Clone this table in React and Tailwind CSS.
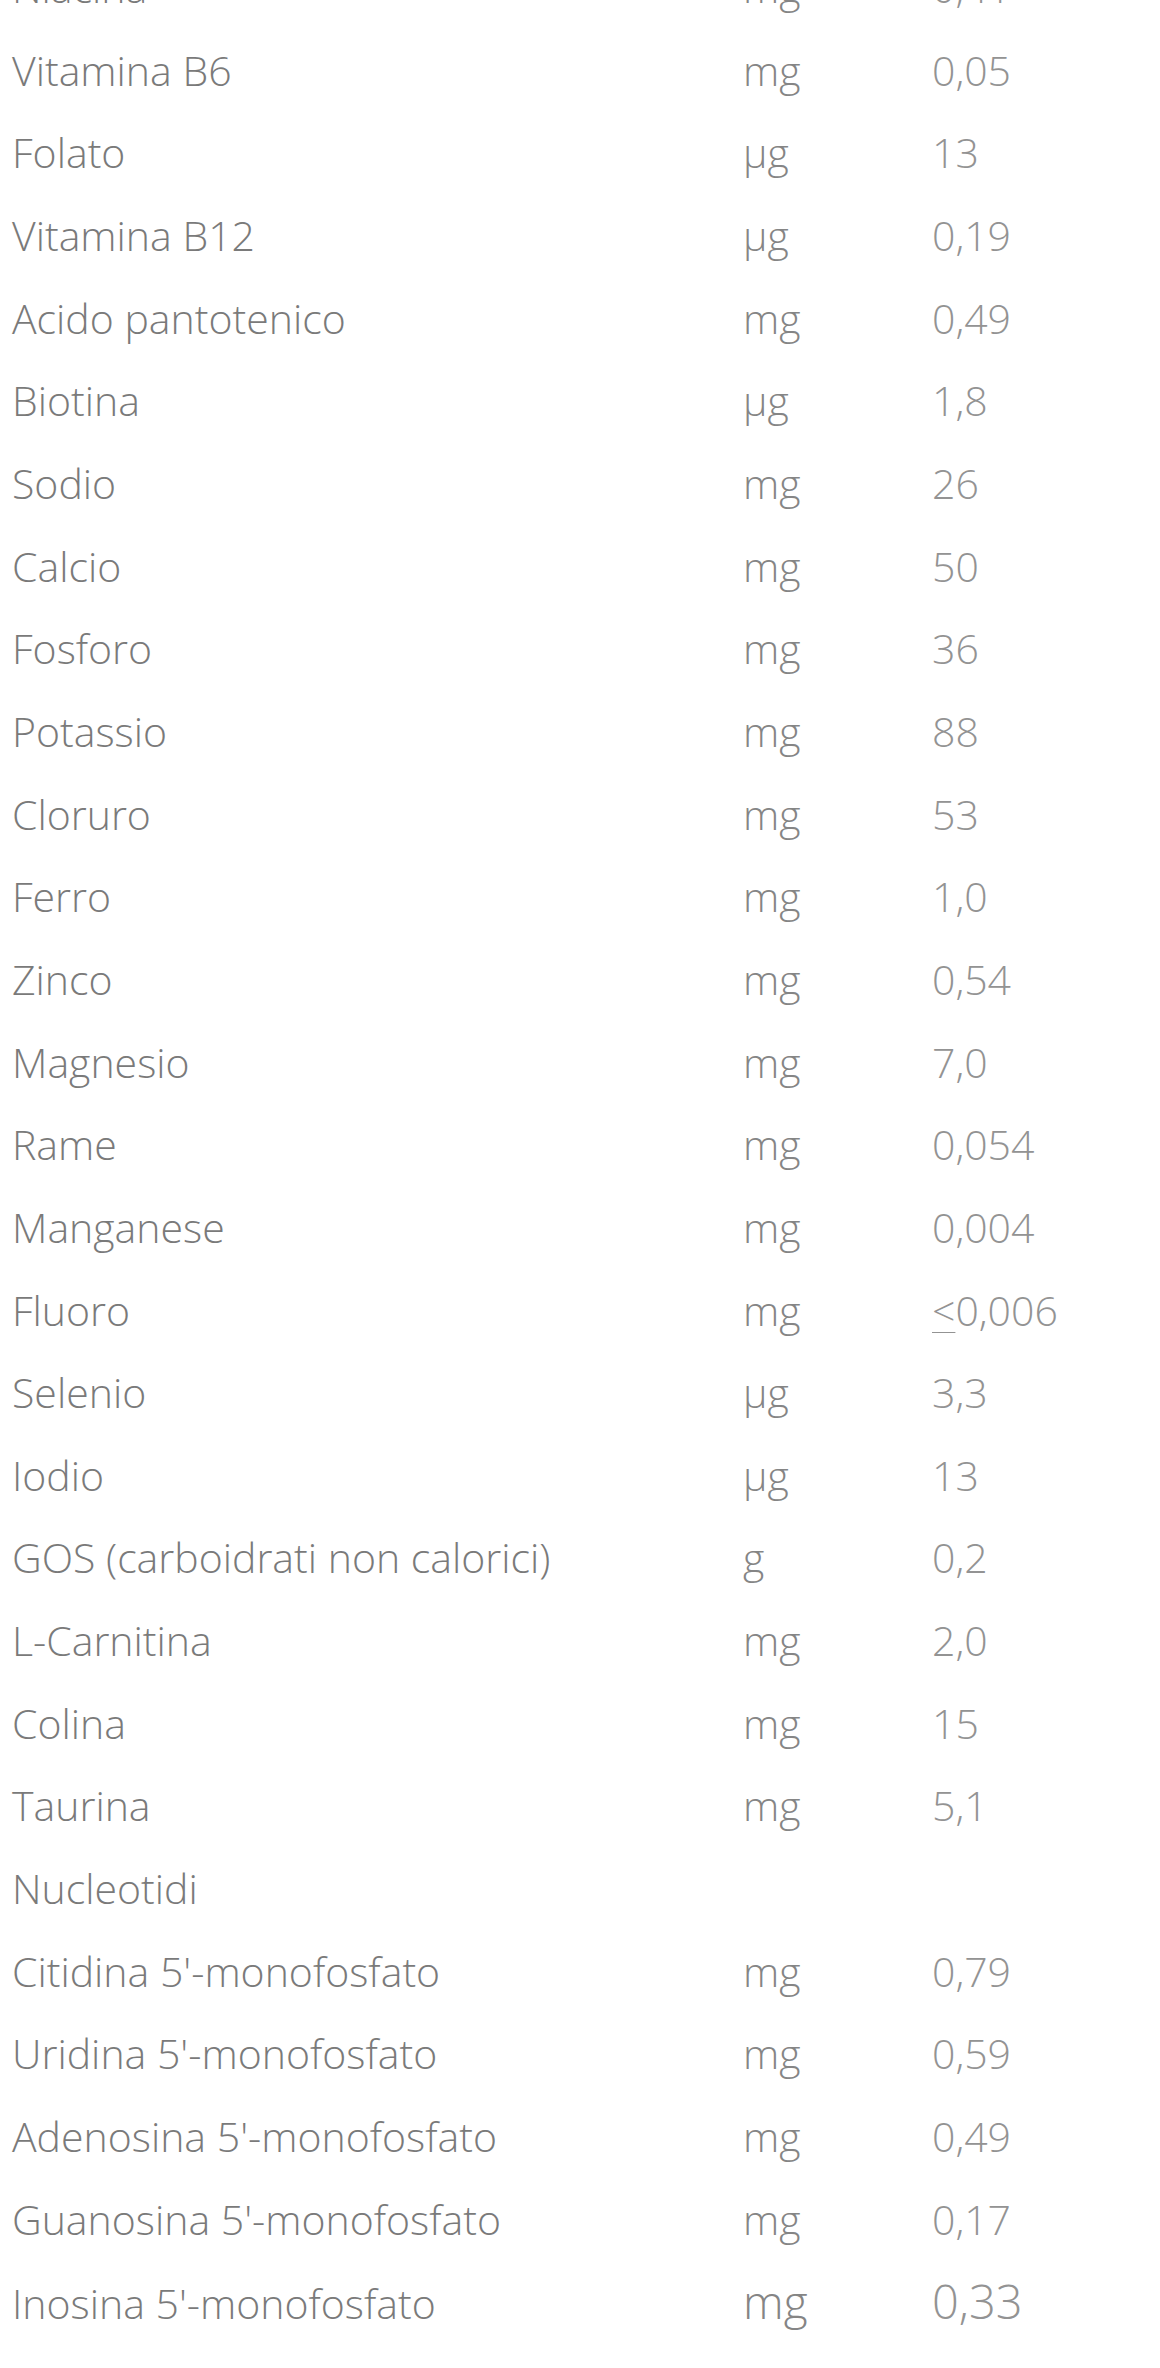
import React from 'react';

const rows = [
  ['Niacina', 'mg', '0,41'],
  ['Vitamina B6', 'mg', '0,05'],
  ['Folato', 'µg', '13'],
  ['Vitamina B12', 'µg', '0,19'],
  ['Acido pantotenico', 'mg', '0,49'],
  ['Biotina', 'µg', '1,8'],
  ['Sodio', 'mg', '26'],
  ['Calcio', 'mg', '50'],
  ['Fosforo', 'mg', '36'],
  ['Potassio', 'mg', '88'],
  ['Cloruro', 'mg', '53'],
  ['Ferro', 'mg', '1,0'],
  ['Zinco', 'mg', '0,54'],
  ['Magnesio', 'mg', '7,0'],
  ['Rame', 'mg', '0,054'],
  ['Manganese', 'mg', '0,004'],
  ['Fluoro', 'mg', 'le'],
  ['Selenio', 'µg', '3,3'],
  ['Iodio', 'µg', '13'],
  ['GOS (carboidrati non calorici)', 'g', '0,2'],
  ['L-Carnitina', 'mg', '2,0'],
  ['Colina', 'mg', '15'],
  ['Taurina', 'mg', '5,1'],
  ['Nucleotidi', '', ''],
  ['Citidina 5\'-monofosfato', 'mg', '0,79'],
  ['Uridina 5\'-monofosfato', 'mg', '0,59'],
  ['Adenosina 5\'-monofosfato', 'mg', '0,49'],
  ['Guanosina 5\'-monofosfato', 'mg', '0,17'],
];

// "<" underlined, as the table shows it
function Value({ v }) {
  if (v === 'le') {
    return (
      <span>
        <span className="underline decoration-1 underline-offset-[6px]">{'<'}</span>0,006
      </span>
    );
  }
  return <span>{v}</span>;
}

export default function App() {
  return (
    <div className="w-[1160px] h-[2368px] overflow-hidden bg-white" style={{ fontFamily: '"Open Sans", "DejaVu Sans", sans-serif' }}>
      <div className="-mt-[54px] pl-3">
        {rows.map(([name, unit, value], i) => (
          <div key={i} className="grid grid-cols-[731px_189px_1fr] h-[82.67px] items-baseline text-[41px] leading-[82.67px] font-light">
            <span className="text-[#7a7a7a] whitespace-nowrap">{name}</span>
            <span className="text-[#858585]">{unit}</span>
            <span className="text-[#939393]"><Value v={value} /></span>
          </div>
        ))}
        <div className="grid grid-cols-[731px_189px_1fr] h-[82.67px] items-baseline leading-[82.67px] font-light">
          <span className="text-[41px] text-[#7a7a7a] whitespace-nowrap">Inosina 5'-monofosfato</span>
          <span className="text-[46px] text-[#858585]">mg</span>
          <span className="text-[47px] text-[#939393]">0,33</span>
        </div>
      </div>
    </div>
  );
}
